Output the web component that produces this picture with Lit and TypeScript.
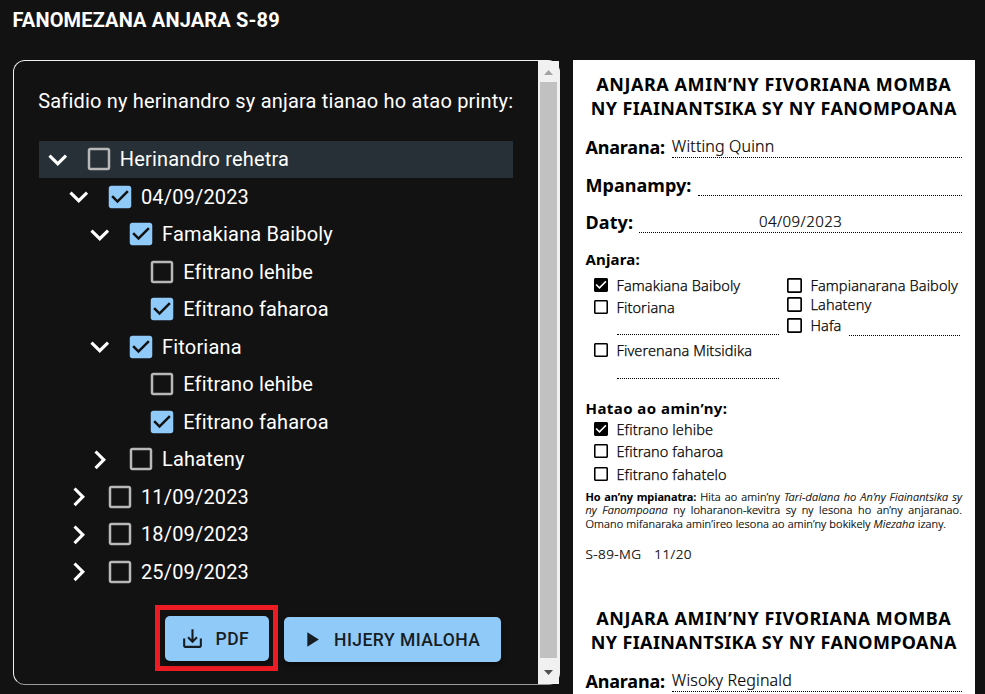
import { LitElement, html, css, svg } from "lit";
import { customElement, property } from "lit/decorators.js";
import { classMap } from "lit/directives/class-map.js";

const ICONS = {
  expanded: "M16.59 8.59 12 13.17 7.41 8.59 6 10l6 6 6-6z",
  collapsed: "M10 6 8.59 7.41 13.17 12l-4.58 4.59L10 18l6-6z",
  checked:
    "M19 3H5c-1.11 0-2 .9-2 2v14c0 1.1.89 2 2 2h14c1.11 0 2-.9 2-2V5c0-1.1-.89-2-2-2zm-9 14l-5-5 1.41-1.41L10 14.17l7.59-7.59L19 8l-9 9z",
  unchecked:
    "M19 5v14H5V5h14m0-2H5c-1.1 0-2 .9-2 2v14c0 1.1.9 2 2 2h14c1.1 0 2-.9 2-2V5c0-1.1-.9-2-2-2z",
  save: "M19 12v7H5v-7H3v7c0 1.1.9 2 2 2h14c1.1 0 2-.9 2-2v-7h-2zm-6 .67l2.59-2.58L17 11.5l-5 5-5-5 1.41-1.41L11 12.67V3h2z",
  play: "M8 5v14l11-7z",
};

const icon = (name: keyof typeof ICONS, cls: string, box = "0 0 24 24") =>
  html`<svg class=${cls} viewBox=${box} fill="currentColor">${svg`<path d=${ICONS[name]}></path>`}</svg>`;

interface TreeRow {
  label: string;
  depth: number;
  checked?: boolean;
  open?: boolean;
  leaf?: boolean;
}

const TREE: TreeRow[] = [
  { label: "Herinandro rehetra", depth: 0, open: true },
  { label: "04/09/2023", depth: 1, open: true, checked: true },
  { label: "Famakiana Baiboly", depth: 2, open: true, checked: true },
  { label: "Efitrano lehibe", depth: 3, leaf: true },
  { label: "Efitrano faharoa", depth: 3, leaf: true, checked: true },
  { label: "Fitoriana", depth: 2, open: true, checked: true },
  { label: "Efitrano lehibe", depth: 3, leaf: true },
  { label: "Efitrano faharoa", depth: 3, leaf: true, checked: true },
  { label: "Lahateny", depth: 2 },
  { label: "11/09/2023", depth: 1 },
  { label: "18/09/2023", depth: 1 },
  { label: "25/09/2023", depth: 1 },
];

@customElement("assignment-tree")
class AssignmentTree extends LitElement {
  static styles = css`
    :host {
      display: block;
    }
    .row {
      display: flex;
      align-items: center;
      height: 37.5px;
      box-sizing: border-box;
      white-space: nowrap;
    }
    .focused {
      background: #263036;
    }
    .toggle {
      width: 18.75px;
      display: flex;
      justify-content: center;
      margin-right: 16.75px;
      flex: none;
    }
    .chevron {
      width: 37.5px;
      height: 37.5px;
      flex: none;
    }
    .box {
      width: 30px;
      height: 30px;
      flex: none;
      margin-right: 5.75px;
      color: #b8b8b8;
    }
    .on .box {
      color: #90caf9;
    }
    .label {
      letter-spacing: 0.17px;
    }
  `;

  render() {
    return TREE.map(
      (r, i) => html`<div
        class=${classMap({ row: true, focused: i === 0, on: !!r.checked })}
        style="padding-left:${9.5 + r.depth * 21.15}px"
      >
        <span class="toggle">${r.leaf ? "" : icon(r.open ? "expanded" : "collapsed", "chevron")}</span>
        ${icon(r.checked ? "checked" : "unchecked", "box")}
        <span class="label">${r.label}</span>
      </div>`
    );
  }
}

@customElement("assignment-slip")
class AssignmentSlip extends LitElement {
  @property() name = "";
  @property() date = "";
  @property({ type: Boolean }) brief = false;

  static styles = css`
    :host {
      display: block;
      height: 534px;
      padding: 12px 13px 0 12.5px;
      box-sizing: border-box;
      color: #000;
      font-family: "Noto Sans", "Open Sans", sans-serif;
      white-space: nowrap;
    }
    .title {
      font-size: 18px;
      font-weight: 700;
      line-height: 24px;
      text-align: center;
      letter-spacing: 0.557px;
    }
    .second {
      letter-spacing: 0.378px;
    }
    .field {
      display: flex;
      align-items: flex-end;
      gap: 7px;
      height: 38px;
      line-height: 22px;
    }
    .short {
      height: 37px;
    }
    .key {
      font-size: 18px;
      font-weight: 700;
      letter-spacing: -0.2px;
    }
    .wide {
      letter-spacing: 0.05px;
    }
    .value {
      flex: 1;
      height: 22px;
      line-height: 21px;
      box-sizing: border-box;
      border-bottom: 1px dotted #000;
      font-size: 16px;
      font-weight: 300;
      letter-spacing: 0.15px;
      -webkit-text-stroke: 0.2px #000;
    }
    .date {
      text-align: center;
      font-size: 15px;
      letter-spacing: 0.42px;
    }
    .short .key {
      letter-spacing: 0.1px;
      margin-right: -1px;
    }
    .heading {
      font-size: 15px;
      font-weight: 700;
      line-height: 20px;
      letter-spacing: 0.44px;
      padding: 16px 0 6px;
    }
    .tight {
      letter-spacing: 0.15px;
    }
    .place {
      padding: 19px 0 1px;
    }
    .parts {
      display: grid;
      grid-template-columns: 185px 173px;
      column-gap: 8px;
      margin-left: 8.5px;
      height: 104px;
    }
    .col {
      display: flex;
      flex-direction: column;
    }
    .item {
      display: flex;
      align-items: center;
      gap: 8.5px;
      height: 20px;
      font-size: 14.5px;
      font-weight: 300;
      line-height: 20px;
      letter-spacing: 0.1px;
      -webkit-text-stroke: 0.25px #000;
    }
    .check {
      width: 14px;
      height: 14px;
      flex: none;
    }
    .right .check {
      width: 15px;
      height: 15px;
    }
    .rule {
      border-bottom: 1px dotted #000;
      margin-left: 22.5px;
      height: 17px;
    }
    .last {
      height: 18px;
    }
    .next {
      margin-top: 2px;
    }
    .after {
      margin-top: 5px;
    }
    .up {
      margin-top: -1px;
    }
    .down {
      margin-top: 1px;
    }
    .fill {
      flex: 1;
      height: 20px;
      margin-left: -1px;
      border-bottom: 1px dotted #000;
    }
    .rooms {
      margin-left: 8.5px;
      display: flex;
      flex-direction: column;
    }
    .third {
      margin-top: 3px;
    }
    .note {
      font-size: 11px;
      font-weight: 300;
      line-height: 13.5px;
      letter-spacing: 0.12px;
      text-align: justify;
      white-space: normal;
      margin-top: 5.5px;
      -webkit-text-stroke: 0.2px #000;
    }
    .note b {
      font-weight: 700;
      letter-spacing: -0.1px;
      -webkit-text-stroke: 0;
    }
    .code {
      display: flex;
      gap: 13px;
      font-size: 13.5px;
      font-weight: 300;
      line-height: 20px;
      letter-spacing: 0.4px;
      margin-top: 13.5px;
      -webkit-text-stroke: 0.2px #000;
    }
  `;

  item(label: string, on = false, extra = "", tail: unknown = "") {
    return html`<div class="item ${extra}">
      ${icon(on ? "checked" : "unchecked", "check", "3 3 18 18")}<span>${label}</span>${tail}
    </div>`;
  }

  details() {
    return html`
      <div class="field"><span class="key wide">Mpanampy:</span><span class="value"></span></div>
      <div class="field short"><span class="key">Daty:</span><span class="value date">${this.date}</span></div>
      <div class="heading tight">Anjara:</div>
      <div class="parts">
        <div class="col">
          ${this.item("Famakiana Baiboly", true)} ${this.item("Fitoriana", false, "next")}
          <div class="rule"></div>
          ${this.item("Fiverenana Mitsidika", false, "after")}
          <div class="rule last"></div>
        </div>
        <div class="col right">
          ${this.item("Fampianarana Baiboly")} ${this.item("Lahateny", false, "up")}
          ${this.item("Hafa", false, "down", html`<span class="fill"></span>`)}
        </div>
      </div>
      <div class="heading place">Hatao ao amin’ny:</div>
      <div class="rooms">
        ${this.item("Efitrano lehibe", true)} ${this.item("Efitrano faharoa", false, "next")}
        ${this.item("Efitrano fahatelo", false, "third")}
      </div>
      <div class="note">
        <b>Ho an’ny mpianatra:</b> Hita ao amin’ny <i>Tari-dalana ho An’ny Fiainantsika sy ny Fanompoana</i> ny
        loharanon-kevitra sy ny lesona ho an’ny anjaranao. Omano mifanaraka amin’ireo lesona ao amin’ny bokikely
        <i>Miezaha</i> izany.
      </div>
      <div class="code"><span>S-89-MG</span><span>11/20</span></div>
    `;
  }

  render() {
    return html`
      <div class="title">ANJARA AMIN’NY FIVORIANA MOMBA</div>
      <div class="title second">NY FIAINANTSIKA SY NY FANOMPOANA</div>
      <div class="field"><span class="key">Anarana:</span><span class="value">${this.name}</span></div>
      ${this.brief ? "" : this.details()}
    `;
  }
}

@customElement("app-root")
class AppRoot extends LitElement {
  static styles = css`
    :host {
      display: block;
      height: 694px;
      overflow: hidden;
      background: #121212;
      color: #fff;
      font: 20px/30px Roboto, "Liberation Sans", sans-serif;
    }
    .page-title {
      padding: 5px 0 0 12.5px;
      height: 55px;
      font-weight: 700;
      letter-spacing: 0.15px;
    }
    .body {
      display: flex;
      align-items: flex-start;
      gap: 13px;
      padding-left: 13px;
    }
    .card {
      display: flex;
      flex: none;
      width: 547px;
      height: 625px;
      box-sizing: border-box;
      border: 1px solid #f0f0f0;
      border-bottom-color: #9a9a9a;
      border-radius: 12px;
    }
    .content {
      flex: 1;
      min-width: 0;
      padding: 25px 25px 0;
      white-space: nowrap;
    }
    .prompt {
      letter-spacing: 0.185px;
      margin-left: -0.75px;
    }
    .tree {
      margin-top: 24.5px;
    }
    .actions {
      display: flex;
      align-items: center;
      justify-content: flex-end;
      gap: 6px;
      margin: 14.5px 12px 0 0;
    }
    .mark {
      border: 5px solid #ed1c24;
      padding: 6px 4px 5px 5px;
    }
    .button {
      display: flex;
      align-items: center;
      box-sizing: border-box;
      height: 45px;
      width: 104px;
      padding-left: 15px;
      gap: 10.5px;
      border-radius: 5px;
      background: #90caf9;
      color: #161d23;
      font-size: 17.5px;
      font-weight: 500;
      letter-spacing: 0.47px;
      box-shadow: 0 3px 5px rgba(0, 0, 0, 0.4);
    }
    .preview {
      width: 217px;
      padding-left: 15px;
      gap: 10px;
      margin-top: 3px;
    }
    .glyph {
      width: 25px;
      height: 25px;
      flex: none;
    }
    .scrollbar {
      width: 21px;
      flex: none;
      height: 623px;
      background: #f1f1f1;
      display: flex;
      flex-direction: column;
      align-items: center;
    }
    .arrow {
      height: 21px;
      padding-top: 2px;
      box-sizing: border-box;
      display: flex;
      align-items: center;
      flex: none;
    }
    .foot {
      height: 26px;
      padding-top: 3px;
    }
    .tri {
      width: 9px;
      height: 5px;
    }
    .dim {
      color: #a3a3a3;
    }
    .dark {
      color: #505050;
    }
    .thumb {
      width: 17px;
      flex: 1;
      background: #c1c1c1;
    }
    .sheet {
      flex: none;
      width: 402px;
      height: 634px;
      overflow: hidden;
      background: #fff;
    }
  `;

  render() {
    return html`
      <div class="page-title">FANOMEZANA ANJARA S-89</div>
      <div class="body">
        <section class="card">
          <div class="content">
            <div class="prompt">Safidio ny herinandro sy anjara tianao ho atao printy:</div>
            <assignment-tree class="tree"></assignment-tree>
            <div class="actions">
              <div class="mark"><div class="button">${icon("save", "glyph")}<span>PDF</span></div></div>
              <div class="button preview">${icon("play", "glyph")}<span>HIJERY MIALOHA</span></div>
            </div>
          </div>
          <div class="scrollbar">
            <div class="arrow dim">
              <svg class="tri" viewBox="0 0 9 5" fill="currentColor"><path d="M4.5 0 9 5H0z"></path></svg>
            </div>
            <div class="thumb"></div>
            <div class="arrow foot dark">
              <svg class="tri" viewBox="0 0 9 5" fill="currentColor"><path d="M0 0h9L4.5 5z"></path></svg>
            </div>
          </div>
        </section>
        <section class="sheet">
          <assignment-slip name="Witting Quinn" date="04/09/2023"></assignment-slip>
          <assignment-slip name="Wisoky Reginald" brief></assignment-slip>
        </section>
      </div>
    `;
  }
}
